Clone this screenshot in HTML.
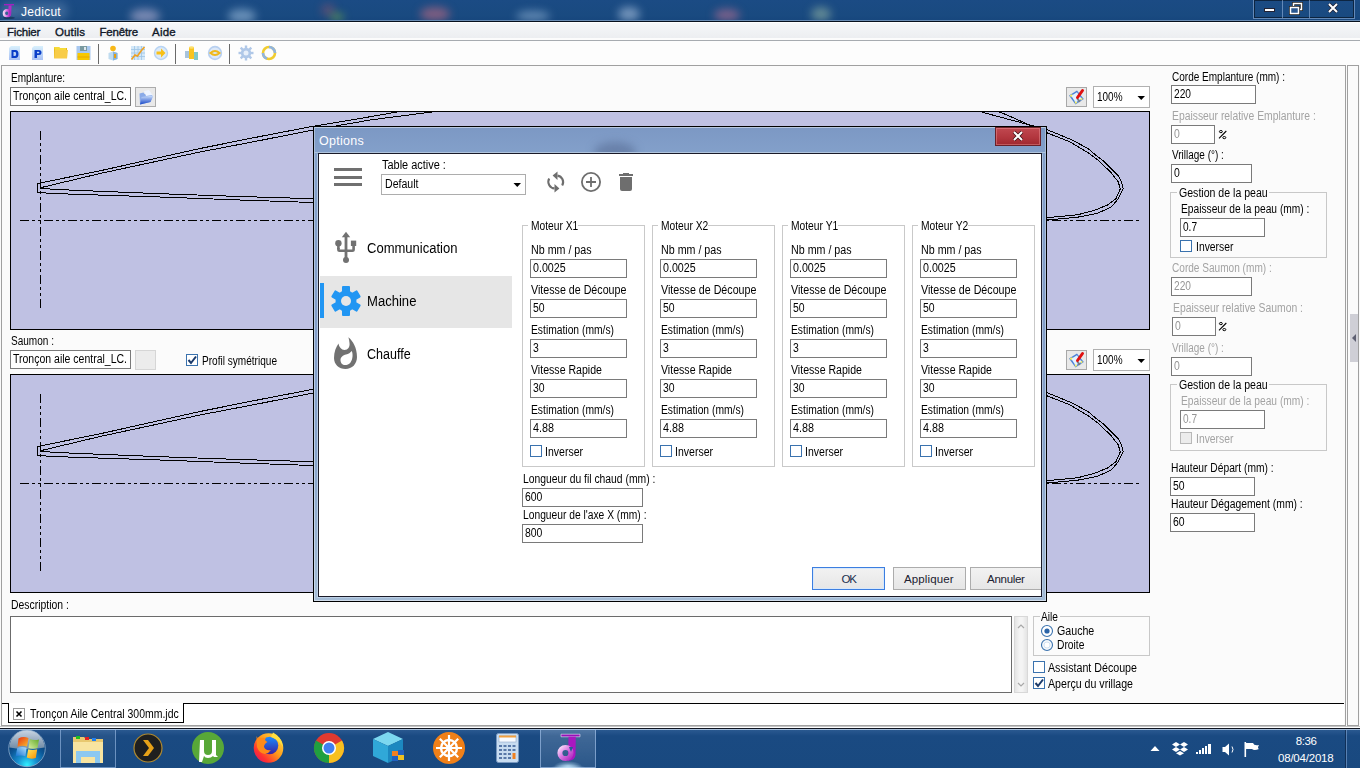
<!DOCTYPE html>
<html><head><meta charset="utf-8"><style>
html,body{margin:0;padding:0;width:1360px;height:768px;overflow:hidden;background:#fafafa;position:relative}
body>div,body>span,body>svg{position:absolute}
.t{position:absolute;font-family:"Liberation Sans",sans-serif;line-height:1;white-space:pre}
</style></head><body>
<div style="left:0px;top:0px;width:1360px;height:22px;background:linear-gradient(#1b4b84,#194a80 70%,#16457c)"></div>
<div style="left:130px;top:9px;width:30px;height:14px;border-radius:50%;background:rgba(200,190,220,.55);filter:blur(4px)"></div>
<div style="left:228px;top:9px;width:28px;height:14px;border-radius:50%;background:rgba(170,200,230,.55);filter:blur(4px)"></div>
<div style="left:321px;top:4px;width:14px;height:12px;border-radius:50%;background:rgba(200,90,100,.35);filter:blur(4px)"></div>
<div style="left:330px;top:13px;width:14px;height:8px;border-radius:50%;background:rgba(140,200,60,.5);filter:blur(4px)"></div>
<div style="left:420px;top:7px;width:30px;height:14px;border-radius:50%;background:rgba(210,110,130,.55);filter:blur(4px)"></div>
<div style="left:516px;top:11px;width:34px;height:10px;border-radius:50%;background:rgba(170,200,230,.5);filter:blur(4px)"></div>
<div style="left:618px;top:7px;width:22px;height:14px;border-radius:50%;background:rgba(190,210,235,.55);filter:blur(4px)"></div>
<div style="left:714px;top:9px;width:26px;height:12px;border-radius:50%;background:rgba(220,120,150,.5);filter:blur(4px)"></div>
<div style="left:811px;top:7px;width:20px;height:14px;border-radius:50%;background:rgba(170,200,170,.5);filter:blur(4px)"></div>
<div style="left:0px;top:20px;width:1360px;height:1px;background:#6a8cb4"></div>
<div style="left:0px;top:21px;width:1360px;height:1px;background:#06101e"></div>
<div style="left:14px;top:2px;width:54px;height:18px;border-radius:9px;background:rgba(150,180,215,.28);filter:blur(4px)"></div>
<div style="left:0px;top:2px;width:18px;height:18px;border-radius:9px;background:rgba(150,180,215,.25);filter:blur(3px)"></div>
<svg style="left:0px;top:0px" width="18" height="20" viewBox="0 0 18 20">
<defs><linearGradient id="jg" x1="0" y1="0" x2="1" y2="0"><stop offset="0" stop-color="#f4d0f4"/><stop offset=".6" stop-color="#d060e0"/><stop offset="1" stop-color="#a828c0"/></linearGradient></defs>
<ellipse cx="9" cy="17.8" rx="6" ry="1.2" fill="#0a2040" opacity=".5"/>
<path d="M4 4 H14 V5.4 H4 Z" fill="#a020c0"/>
<path d="M8.6 5.4 H11.6 L11.2 14 Q11 17 8 17.2 Z" fill="#b030c8"/>
<circle cx="6.8" cy="13.2" r="2.9" fill="none" stroke="url(#jg)" stroke-width="2.4"/>
</svg>
<div style="left:1253px;top:0;width:102px;height:19px;border:1px solid rgba(160,190,230,.55);border-top:none;box-sizing:border-box;box-shadow:inset 0 0 0 1px rgba(0,0,0,.5)"></div>
<div style="left:1282px;top:0px;width:1px;height:18px;background:rgba(160,190,230,.55)"></div>
<div style="left:1309px;top:0px;width:1px;height:18px;background:rgba(160,190,230,.55)"></div>
<div style="left:1264px;top:8px;width:11px;height:4px;background:#fff;border:1px solid #223;box-sizing:border-box"></div>
<svg style="left:1288px;top:1px" width="16" height="14"><rect x="5.5" y="2.5" width="8" height="6" fill="none" stroke="#222" stroke-width="3"/><rect x="5.5" y="2.5" width="8" height="6" fill="none" stroke="#fff" stroke-width="1.5"/>
<rect x="2.5" y="6.5" width="8" height="6" fill="#1b4a80" stroke="#222" stroke-width="3"/><rect x="2.5" y="6.5" width="8" height="6" fill="#2a5890" stroke="#fff" stroke-width="1.5"/></svg>
<svg style="left:1326px;top:1px" width="14" height="14"><path d="M3 3 L11 11 M11 3 L3 11" stroke="#223" stroke-width="3.5"/><path d="M3 3 L11 11 M11 3 L3 11" stroke="#fff" stroke-width="2"/></svg>
<div style="left:0px;top:22px;width:1360px;height:18px;background:linear-gradient(#ffffff 0px,#ffffff 1px,#f6f7f9 1px,#eceef1 16px,#fcfcfc 16px)"></div>
<div style="left:0px;top:40px;width:1360px;height:1px;background:#a7abb0"></div>
<div style="left:0px;top:41px;width:1360px;height:24px;background:#fdfdfd"></div>
<div style="left:98px;top:44px;width:1px;height:20px;background:#6a6a6a"></div>
<div style="left:175px;top:44px;width:1px;height:20px;background:#6a6a6a"></div>
<div style="left:229px;top:44px;width:1px;height:20px;background:#6a6a6a"></div>
<svg style="left:8px;top:45px" width="14" height="16" viewBox="0 0 14 16">
<defs><linearGradient id="pg" x1="0" y1="0" x2="0" y2="1"><stop offset="0" stop-color="#d8f0fc"/><stop offset="1" stop-color="#a8c0f4"/></linearGradient></defs>
<path d="M1 3 L3 1 H12 V15 H1 Z" fill="url(#pg)"/>
<path d="M3.5 5 H7.5 Q10.5 5 10.5 9 Q10.5 13 7.5 13 H3.5 Z M5.5 7 V11 H7 Q8.2 11 8.2 9 Q8.2 7 7 7 Z" fill="#0a3ec8" fill-rule="evenodd"/>
</svg>
<svg style="left:31px;top:45px" width="14" height="16" viewBox="0 0 14 16">
<path d="M1 3 L3 1 H12 V15 H1 Z" fill="url(#pg)"/>
<path d="M3.5 5 H8 Q10.5 5 10.5 7.5 Q10.5 10 8 10 H6 V13 H3.5 Z M6 6.8 V8.3 H7.8 Q8.3 8.3 8.3 7.5 Q8.3 6.8 7.8 6.8 Z" fill="#0a3ec8" fill-rule="evenodd"/>
</svg>
<svg style="left:53px;top:46px" width="16" height="14" viewBox="0 0 16 14">
<path d="M1 1 H6 L7 2 H14 V12 H1 Z" fill="#e8b820"/>
<path d="M2 4 H15 L14 12.5 H1 Z" fill="#f8cc48"/>
<path d="M1 1 H6 L7 2 H13 V4 H2 Z" fill="#fff04a" opacity=".6"/>
</svg>
<svg style="left:76px;top:46px" width="15" height="15" viewBox="0 0 15 15">
<rect x="0.5" y="0" width="14" height="14" fill="#a8c8f0"/>
<rect x="4" y="0" width="7" height="5" fill="#7a9aa0"/><rect x="8" y="1" width="2" height="3" fill="#dfe8ee"/>
<rect x="1.5" y="7" width="12" height="7" fill="#f8c800"/><rect x="1.5" y="10.5" width="12" height="1" fill="#e8a800"/>
</svg>
<svg style="left:106px;top:45px" width="14" height="16" viewBox="0 0 14 16">
<circle cx="7" cy="3.5" r="2.8" fill="#f8b818"/>
<path d="M2.5 8 L7 6.5 L11.5 8 V14 L7 15.5 L2.5 14 Z" fill="#c0dcf0"/>
<path d="M7 6.5 L11.5 8 V14 L7 15.5 Z" fill="#8ab4d8"/>
<rect x="8" y="9" width="2" height="4" fill="#e8a010"/>
</svg>
<svg style="left:130px;top:45px" width="16" height="16" viewBox="0 0 16 16">
<rect x="1" y="1" width="14" height="14" fill="#d4e8f8"/>
<path d="M1 4.5 H15 M1 8 H15 M1 11.5 H15 M4.5 1 V15 M8 1 V15 M11.5 1 V15" stroke="#9ec4e4" stroke-width=".8"/>
<path d="M1.5 14.5 L5 10 L7.5 11 L11 6 L14.5 2" stroke="#f0a020" stroke-width="1.6" fill="none"/>
</svg>
<svg style="left:153px;top:45px" width="16" height="16" viewBox="0 0 16 16">
<circle cx="8" cy="8" r="7.2" fill="#b8d4f4"/><circle cx="8" cy="8" r="5.8" fill="#dceaf8"/>
<path d="M3.5 6.5 H8 V3.5 L12.5 8 L8 12.5 V9.5 H3.5 Z" fill="#f8c018"/>
</svg>
<svg style="left:184px;top:45px" width="16" height="16" viewBox="0 0 16 16">
<rect x="1" y="6" width="4" height="7" fill="#a8c4dc"/>
<rect x="5" y="2" width="5" height="12" fill="#f8c420"/><ellipse cx="7.5" cy="2.5" rx="2.5" ry="1.2" fill="#fde070"/>
<rect x="10" y="7" width="4" height="8" fill="#80c8c8"/>
</svg>
<svg style="left:207px;top:45px" width="16" height="16" viewBox="0 0 16 16">
<circle cx="8" cy="8" r="7.2" fill="#b8d0f0"/><circle cx="8" cy="8" r="5.5" fill="#dce8f8"/>
<path d="M3.5 8 Q8 4 12.5 8 Q8 12 3.5 8 Z" fill="none" stroke="#f0b818" stroke-width="2"/>
</svg>
<svg style="left:238px;top:45px" width="16" height="16" viewBox="0 0 16 16">
<g fill="#b0c8e8"><circle cx="8" cy="8" r="5.2"/>
<rect x="6.8" y="0.5" width="2.4" height="15"/><rect x="0.5" y="6.8" width="15" height="2.4"/>
<rect x="6.8" y="0.5" width="2.4" height="15" transform="rotate(45 8 8)"/><rect x="6.8" y="0.5" width="2.4" height="15" transform="rotate(-45 8 8)"/></g>
<circle cx="8" cy="8" r="2.5" fill="#e8f0fa"/>
</svg>
<svg style="left:261px;top:45px" width="16" height="16" viewBox="0 0 16 16">
<circle cx="8" cy="8" r="6" fill="none" stroke="#f0cc30" stroke-width="2.6"/>
<path d="M8 2 A6 6 0 0 1 14 8" fill="none" stroke="#90b4e0" stroke-width="2.6"/>
<path d="M2 8 A6 6 0 0 0 6 13.6" fill="none" stroke="#90b4e0" stroke-width="2.6"/>
</svg>
<div style="left:1px;top:65px;width:1345px;height:661px;background:#fbfbfb;border:1px solid #a0a0a0;box-sizing:border-box"></div>
<div style="left:1347px;top:65px;width:12px;height:661px;background:#fbfbfb;border:1px solid #a0a0a0;box-sizing:border-box"></div>
<div style="left:1350px;top:314px;width:8px;height:48px;background:#cfcfd6"></div>
<svg style="left:1350px;top:332px" width="8" height="12"><path d="M2 6 L6 2 V10 Z" fill="#5e6072"/></svg>
<div style="left:10px;top:87px;width:121px;height:19px;background:#fff;border:1px solid #7a7a7a;box-sizing:border-box"></div>
<div style="left:135px;top:87px;width:21px;height:20px;background:#e9e9e9;border:1px solid #acacac;box-sizing:border-box"></div>
<svg style="left:135px;top:87px" width="21" height="20" viewBox="0 0 21 20">
<defs><linearGradient id="fg" x1="0" y1="0" x2="0" y2="1"><stop offset="0" stop-color="#d0e2fc"/><stop offset="1" stop-color="#1848c8"/></linearGradient></defs>
<path d="M4.5 6.5 L8.5 5.5 L9.5 7 L16 6.5 L17.5 9 L15.5 15 L5 17.5 Z" fill="#8aaae8"/>
<path d="M9 4 L14 3 L17.5 8 L11 9 Z" fill="#eef4ff"/>
<path d="M6.5 10 L18.5 8.5 L15.5 15 L5 17.5 Z" fill="url(#fg)"/>
</svg>
<div style="left:1066px;top:87px;width:21px;height:20px;background:#e9e9e9;border:1px solid #a8a8a8;box-sizing:border-box"></div>
<svg style="left:1066px;top:87px" width="21" height="20" viewBox="0 0 21 20">
<path d="M3 8.5 L11 3.5 L17.8 12 L9.5 17.6 Z" fill="#4a80d8"/>
<path d="M5.2 8.8 L11 5.3 L15.6 11.8 L9.6 15.5 Z" fill="#e4f2ff"/>
<path d="M3.5 8.5 L6.5 7 L5.5 10.5 Z M9.5 17 L8.5 14 L11.5 15.5 Z M17 12 L14.5 13.5 L15 10.5 Z" fill="#f8f060"/>
<path d="M11.3 11.5 L13.8 14.8" stroke="#7a8088" stroke-width="2"/>
<path d="M16.5 3.5 L11.5 10.5" stroke="#e01010" stroke-width="3" stroke-linecap="round"/>
</svg>
<div style="left:1093px;top:86px;width:57px;height:22px;background:#fff;border:1px solid #b0b0b0;box-sizing:border-box"></div>
<svg style="left:1137px;top:95px" width="9" height="6"><path d="M0.5 1 H8 L4.25 5 Z" fill="#000"/></svg>
<div style="left:10px;top:350px;width:121px;height:19px;background:#fff;border:1px solid #7a7a7a;box-sizing:border-box"></div>
<div style="left:135px;top:350px;width:21px;height:20px;background:#ececec;border:1px solid #d6d6d6;box-sizing:border-box"></div>
<div style="left:186px;top:354px;width:12px;height:12px;background:#fff;border:1px solid #3a72ae;box-sizing:border-box"></div>
<svg style="left:186px;top:354px" width="12" height="12"><path d="M2.5 6 L5 9 L10 2.5" stroke="#1a3a6a" stroke-width="2" fill="none"/></svg>
<div style="left:1066px;top:350px;width:21px;height:20px;background:#e9e9e9;border:1px solid #a8a8a8;box-sizing:border-box"></div>
<svg style="left:1066px;top:350px" width="21" height="20" viewBox="0 0 21 20">
<path d="M3 8.5 L11 3.5 L17.8 12 L9.5 17.6 Z" fill="#4a80d8"/>
<path d="M5.2 8.8 L11 5.3 L15.6 11.8 L9.6 15.5 Z" fill="#e4f2ff"/>
<path d="M3.5 8.5 L6.5 7 L5.5 10.5 Z M9.5 17 L8.5 14 L11.5 15.5 Z M17 12 L14.5 13.5 L15 10.5 Z" fill="#f8f060"/>
<path d="M11.3 11.5 L13.8 14.8" stroke="#7a8088" stroke-width="2"/>
<path d="M16.5 3.5 L11.5 10.5" stroke="#e01010" stroke-width="3" stroke-linecap="round"/>
</svg>
<div style="left:1093px;top:349px;width:57px;height:22px;background:#fff;border:1px solid #b0b0b0;box-sizing:border-box"></div>
<svg style="left:1137px;top:358px" width="9" height="6"><path d="M0.5 1 H8 L4.25 5 Z" fill="#000"/></svg>
<div style="left:10px;top:616px;width:1002px;height:77px;background:#fff;border:1px solid #6b6b6b;box-sizing:border-box"></div>
<div style="left:1014px;top:616px;width:14px;height:77px;background:linear-gradient(90deg,#e4e4e4,#f4f4f4 40%,#f4f4f4 60%,#e4e4e4);border:1px solid #d8d8d8;box-sizing:border-box"></div>
<svg style="left:1014px;top:620px" width="14" height="70"><path d="M4 8 L7 5 L10 8" stroke="#a8a8a8" stroke-width="1.2" fill="none"/><path d="M4 63 L7 66 L10 63" stroke="#a8a8a8" stroke-width="1.2" fill="none"/></svg>
<div style="left:1033px;top:616px;width:117px;height:40px;border:1px solid #c8c8c8;box-sizing:border-box"></div>
<div style="left:1040px;top:612px;width:20px;height:8px;background:#fbfbfb"></div>
<svg style="left:1040px;top:624px" width="14" height="28">
<circle cx="7" cy="7" r="5.5" fill="#fff" stroke="#3a72ae" stroke-width="1.1"/><circle cx="7" cy="7" r="2.6" fill="#2a64a8"/>
<circle cx="7" cy="21" r="5.5" fill="#f4f8fc" stroke="#3a72ae" stroke-width="1.1"/><circle cx="7" cy="21" r="3" fill="#fff" stroke="#c8dcf0" stroke-width=".8"/>
</svg>
<div style="left:1033px;top:661px;width:12px;height:12px;background:#fff;border:1px solid #3a72ae;box-sizing:border-box"></div>
<div style="left:1033px;top:677px;width:12px;height:12px;background:#fff;border:1px solid #3a72ae;box-sizing:border-box"></div>
<svg style="left:1033px;top:677px" width="12" height="12"><path d="M2.5 6 L5 9 L10 2.5" stroke="#1a3a6a" stroke-width="2" fill="none"/></svg>
<div style="left:2px;top:703px;width:6px;height:1px;background:#000"></div>
<div style="left:183px;top:703px;width:1161px;height:1px;background:#000"></div>
<div style="left:8px;top:703px;width:176px;height:20px;background:#fff;border:1px solid #000;border-top:none;box-sizing:border-box"></div>
<div style="left:8px;top:722px;width:1px;height:0px;"></div>
<div style="left:3px;top:704px;width:5px;height:21px;background:#fff"></div>
<div style="left:184px;top:704px;width:1160px;height:21px;background:#fff"></div>
<div style="left:13px;top:708px;width:12px;height:12px;background:#fff;border:1px solid #9a9a9a;box-sizing:border-box"></div>
<svg style="left:13px;top:708px" width="12" height="12"><path d="M3.5 3.5 L8.5 8.5 M8.5 3.5 L3.5 8.5" stroke="#000" stroke-width="1.6"/></svg>
<svg style="left:10px;top:111px" width="1140" height="219" viewBox="0 0 1140 219"><rect x="0.5" y="0.5" width="1139" height="218" fill="#bfc1e3" stroke="#000" stroke-width="1"/><g stroke="#000" stroke-width="1" fill="none" stroke-dasharray="9 3 3 3 3 3"><path d="M10 109.5 H1130"/><path d="M30.5 20 V197"/></g><g stroke="#000" stroke-width="1" fill="none" shape-rendering="crispEdges"><polyline points="30.00,72.00 90.00,59.80 190.00,37.50 250.00,25.50 303.00,15.30 350.00,7.50 387.00,1.00 460.00,-11.00 690.00,-26.00 890.00,-16.00 970.00,0.50 982.50,4.00 1037.00,18.60 1060.00,28.10 1069.00,32.70 1078.20,37.70 1087.30,45.40 1094.60,50.90 1101.00,57.30 1108.30,65.00 1111.50,71.00 1113.30,77.80"/><polyline points="31.00,76.60 90.00,62.50 190.00,41.00 250.00,29.50 303.00,19.00 360.00,9.00 422.00,1.00 490.00,-10.00 690.00,-21.00 910.00,-13.00 988.00,0.50 997.00,4.00 1037.00,21.80 1060.00,30.90 1078.20,41.80 1087.30,48.60 1101.00,61.40 1108.30,71.00 1110.30,77.80"/><polyline points="30.00,77.30 44.00,78.30 70.00,79.50 150.00,82.70 230.00,85.50 303.00,87.70 490.00,94.00 790.00,101.00 990.00,105.50 1037.00,106.70 1067.50,103.80 1084.50,99.30 1097.50,94.00 1106.00,87.60 1110.30,77.80"/><polyline points="30.00,81.50 41.00,82.40 69.00,83.40 150.00,86.00 230.00,89.00 303.00,91.50 490.00,97.00 790.00,105.00 990.00,109.00 1037.00,109.00 1067.50,106.20 1087.00,102.50 1101.40,96.00 1107.90,88.20 1113.10,77.80"/><path d="M30 72.5 H27.5 V81.5 H30"/></g><rect x="0.5" y="0.5" width="1139" height="218" fill="none" stroke="#000" stroke-width="1"/></svg>
<svg style="left:10px;top:374px" width="1140" height="219" viewBox="0 0 1140 219"><rect x="0.5" y="0.5" width="1139" height="218" fill="#bfc1e3" stroke="#000" stroke-width="1"/><g stroke="#000" stroke-width="1" fill="none" stroke-dasharray="9 3 3 3 3 3"><path d="M10 109.5 H1130"/><path d="M30.5 20 V197"/></g><g stroke="#000" stroke-width="1" fill="none" shape-rendering="crispEdges"><polyline points="30.00,72.00 90.00,59.80 190.00,37.50 250.00,25.50 303.00,15.30 350.00,7.50 387.00,1.00 460.00,-11.00 690.00,-26.00 890.00,-16.00 970.00,0.50 982.50,4.00 1037.00,18.60 1060.00,28.10 1069.00,32.70 1078.20,37.70 1087.30,45.40 1094.60,50.90 1101.00,57.30 1108.30,65.00 1111.50,71.00 1113.30,77.80"/><polyline points="31.00,76.60 90.00,62.50 190.00,41.00 250.00,29.50 303.00,19.00 360.00,9.00 422.00,1.00 490.00,-10.00 690.00,-21.00 910.00,-13.00 988.00,0.50 997.00,4.00 1037.00,21.80 1060.00,30.90 1078.20,41.80 1087.30,48.60 1101.00,61.40 1108.30,71.00 1110.30,77.80"/><polyline points="30.00,77.30 44.00,78.30 70.00,79.50 150.00,82.70 230.00,85.50 303.00,87.70 490.00,94.00 790.00,101.00 990.00,105.50 1037.00,106.70 1067.50,103.80 1084.50,99.30 1097.50,94.00 1106.00,87.60 1110.30,77.80"/><polyline points="30.00,81.50 41.00,82.40 69.00,83.40 150.00,86.00 230.00,89.00 303.00,91.50 490.00,97.00 790.00,105.00 990.00,109.00 1037.00,109.00 1067.50,106.20 1087.00,102.50 1101.40,96.00 1107.90,88.20 1113.10,77.80"/><path d="M30 72.5 H27.5 V81.5 H30"/></g><rect x="0.5" y="0.5" width="1139" height="218" fill="none" stroke="#000" stroke-width="1"/></svg>
<div style="left:1171px;top:85px;width:85px;height:19px;background:#fff;border:1px solid #7a7a7a;box-sizing:border-box"></div>
<div style="left:1171px;top:125px;width:44px;height:19px;background:#fff;border:1px solid #7a7a7a;box-sizing:border-box"></div>
<svg style="left:1218px;top:129px" width="10" height="11"><path d="M1 9.3 L8.3 2" stroke="#000" stroke-width="1.1"/><ellipse cx="2.9" cy="2.6" rx="1.5" ry="1.1" fill="none" stroke="#000" stroke-width="1"/><ellipse cx="6.3" cy="8.6" rx="1.5" ry="1.1" fill="none" stroke="#000" stroke-width="1"/></svg>
<div style="left:1171px;top:164px;width:81px;height:19px;background:#fff;border:1px solid #7a7a7a;box-sizing:border-box"></div>
<div style="left:1170px;top:192px;width:157px;height:66px;border:1px solid #c8c8c8;box-sizing:border-box"></div>
<div style="left:1177px;top:187px;width:92px;height:8px;background:#fbfbfb"></div>
<div style="left:1180px;top:218px;width:85px;height:19px;background:#fff;border:1px solid #7a7a7a;box-sizing:border-box"></div>
<div style="left:1180px;top:240px;width:12px;height:12px;background:#fff;border:1px solid #3a72ae;box-sizing:border-box"></div>
<div style="left:1171px;top:277px;width:81px;height:19px;background:#fff;border:1px solid #7a7a7a;box-sizing:border-box"></div>
<div style="left:1172px;top:317px;width:44px;height:19px;background:#fff;border:1px solid #7a7a7a;box-sizing:border-box"></div>
<svg style="left:1218px;top:321px" width="10" height="11"><path d="M1 9.3 L8.3 2" stroke="#000" stroke-width="1.1"/><ellipse cx="2.9" cy="2.6" rx="1.5" ry="1.1" fill="none" stroke="#000" stroke-width="1"/><ellipse cx="6.3" cy="8.6" rx="1.5" ry="1.1" fill="none" stroke="#000" stroke-width="1"/></svg>
<div style="left:1171px;top:357px;width:81px;height:19px;background:#fff;border:1px solid #7a7a7a;box-sizing:border-box"></div>
<div style="left:1170px;top:384px;width:157px;height:67px;border:1px solid #c8c8c8;box-sizing:border-box"></div>
<div style="left:1177px;top:379px;width:92px;height:8px;background:#fbfbfb"></div>
<div style="left:1180px;top:410px;width:85px;height:19px;background:#fff;border:1px solid #7a7a7a;box-sizing:border-box"></div>
<div style="left:1180px;top:432px;width:12px;height:12px;background:#ececec;border:1px solid #b8b8b8;box-sizing:border-box"></div>
<div style="left:1170px;top:477px;width:85px;height:19px;background:#fff;border:1px solid #7a7a7a;box-sizing:border-box"></div>
<div style="left:1170px;top:513px;width:85px;height:19px;background:#fff;border:1px solid #7a7a7a;box-sizing:border-box"></div>
<div style="left:313px;top:126px;width:734px;height:476px;background:#000"></div>
<div style="left:314px;top:127px;width:732px;height:474px;background:linear-gradient(180deg,#7c98c4 0px,#83a0ca 26px,#819cc8 180px,#86a2ca 330px,#a4bcd6 100%)"></div>
<div style="left:314px;top:127px;width:732px;height:1px;background:#b8c8e0"></div>
<div style="left:314px;top:127px;width:1px;height:474px;background:linear-gradient(#a8bcd8,#c8d8ea)"></div>
<div style="left:1045px;top:127px;width:1px;height:474px;background:linear-gradient(#a8bcd8,#c4d4e6)"></div>
<div style="left:1042px;top:154px;width:1px;height:442px;background:rgba(200,215,235,.6)"></div>
<div style="left:314px;top:600px;width:732px;height:1px;background:#d0dcea"></div>
<div style="left:594px;top:142px;width:42px;height:20px;border-radius:50%;background:rgba(80,100,140,.5);filter:blur(4px)"></div>
<div style="left:314px;top:152px;width:732px;height:1px;background:#b0c4dc"></div>
<div style="left:318px;top:153px;width:724px;height:444px;background:#1a1a28"></div>
<div style="left:319px;top:154px;width:722px;height:442px;background:#fff"></div>
<div style="left:317px;top:154px;width:1px;height:443px;background:rgba(205,220,238,.7)"></div>
<div style="left:317px;top:597px;width:725px;height:1px;background:rgba(205,220,238,.6)"></div>
<div style="left:995px;top:127px;width:46px;height:19px;background:linear-gradient(#c04850,#b43840 50%,#a02830);border:1px solid #6a2028;box-sizing:border-box;box-shadow:inset 0 0 0 1px rgba(255,180,180,.35)"></div>
<svg style="left:1011px;top:129px" width="14" height="14"><path d="M3 3 L11 11 M11 3 L3 11" stroke="#401018" stroke-width="3.6"/><path d="M3 3 L11 11 M11 3 L3 11" stroke="#fff" stroke-width="2"/></svg>
<div style="left:334px;top:168px;width:28px;height:3px;background:#707070"></div>
<div style="left:334px;top:176px;width:28px;height:3px;background:#707070"></div>
<div style="left:334px;top:183px;width:28px;height:3px;background:#707070"></div>
<div style="left:381px;top:174px;width:145px;height:21px;background:#fff;border:1px solid #adadad;box-sizing:border-box"></div>
<svg style="left:513px;top:182px" width="9" height="6"><path d="M0.5 1 H8 L4.25 5 Z" fill="#000"/></svg>
<svg style="left:546px;top:170px" width="20" height="24" viewBox="0 0 20 24">
<g fill="none" stroke="#6e6e6e" stroke-width="2.1">
<path d="M11.5 5.6 A6.6 6.6 0 0 1 16.2 15.5"/>
<path d="M8.5 18.4 A6.6 6.6 0 0 1 3.2 8.6"/></g>
<path d="M11.5 1.5 V10 L6.6 5.6 Z" fill="#6e6e6e"/>
<path d="M8.5 14 V22.5 L13.4 18.4 Z" fill="#6e6e6e"/>
</svg>
<svg style="left:580px;top:171px" width="22" height="22" viewBox="0 0 22 22">
<circle cx="11" cy="11" r="9.1" fill="none" stroke="#6e6e6e" stroke-width="1.8"/>
<path d="M6 11 H16 M11 6 V16" stroke="#6e6e6e" stroke-width="1.8"/>
</svg>
<svg style="left:618px;top:172px" width="16" height="20" viewBox="0 0 16 20">
<path d="M1 2 H15 V4 H1 Z M5 1 H11 V2 H5 Z" fill="#6e6e6e"/>
<path d="M2 5 H14 V17 Q14 19 12 19 H4 Q2 19 2 17 Z" fill="#6e6e6e"/>
</svg>
<svg style="left:326px;top:226px" width="40" height="40" viewBox="0 0 40 40">
<g fill="#717171">
<rect x="18.6" y="10" width="2.8" height="24"/>
<path d="M20 5.7 L24.2 11.2 H15.8 Z"/>
<circle cx="12.4" cy="17.2" r="3.2"/>
<rect x="11.1" y="17" width="2.6" height="6"/>
<path d="M11.1 22 V23.6 Q11.1 26.1 13.6 26.1 H26.3 Q28.9 26.1 28.9 23.6 V19 H26.3 V23.4 H13.7 V22 Z"/>
<rect x="24.9" y="14.6" width="5.3" height="5.4"/>
<circle cx="20" cy="34" r="3"/>
</g></svg>
<div style="left:320px;top:276px;width:192px;height:52px;background:#e6e6e6"></div>
<div style="left:320px;top:283px;width:4px;height:35px;background:#2196f3"></div>
<svg style="left:331px;top:286px" width="30" height="30" viewBox="0 0 30 30">
<g fill="#2196f3">
<circle cx="15" cy="15" r="10.5"/>
<rect x="11" y="0" width="8" height="30" rx="1"/>
<rect x="11" y="0" width="8" height="30" rx="1" transform="rotate(60 15 15)"/>
<rect x="11" y="0" width="8" height="30" rx="1" transform="rotate(-60 15 15)"/>
</g><circle cx="15" cy="15" r="5" fill="#e6e6e6"/></svg>
<svg style="left:326px;top:333px" width="40" height="40" viewBox="0 0 40 40">
<path fill="#717171" fill-rule="evenodd" d="M22.4 4.2 C27 8 31 15 31 24 C31 31 26 36 19.5 36 C13 36 8 31.5 8 25 C8 19 10 14 12.5 10.5 C13 14 15.5 17 18.5 17 C22 17 24 14 23.5 10 C23.3 8 23 6 22.4 4.2 Z M25.8 18 C27 21 27 26 24.5 29.5 C23 31.5 21 32 19 32 C16.5 32 14.5 30 14.5 27 C14.5 24 17 22.2 20 21.5 C22.5 21 24.5 19.5 25.8 18 Z"/>
</svg>
<div style="left:522px;top:225px;width:123px;height:242px;border:1px solid #c9c9c9;box-sizing:border-box"></div>
<div style="left:528px;top:220px;width:50px;height:8px;background:#fff"></div>
<div style="left:530px;top:259px;width:97px;height:19px;background:#fff;border:1px solid #7a7a7a;box-sizing:border-box"></div>
<div style="left:530px;top:299px;width:97px;height:19px;background:#fff;border:1px solid #7a7a7a;box-sizing:border-box"></div>
<div style="left:530px;top:339px;width:97px;height:19px;background:#fff;border:1px solid #7a7a7a;box-sizing:border-box"></div>
<div style="left:530px;top:379px;width:97px;height:19px;background:#fff;border:1px solid #7a7a7a;box-sizing:border-box"></div>
<div style="left:530px;top:419px;width:97px;height:19px;background:#fff;border:1px solid #7a7a7a;box-sizing:border-box"></div>
<div style="left:530px;top:445px;width:12px;height:12px;background:#fff;border:1px solid #3a72ae;box-sizing:border-box"></div>
<div style="left:652px;top:225px;width:123px;height:242px;border:1px solid #c9c9c9;box-sizing:border-box"></div>
<div style="left:658px;top:220px;width:50px;height:8px;background:#fff"></div>
<div style="left:660px;top:259px;width:97px;height:19px;background:#fff;border:1px solid #7a7a7a;box-sizing:border-box"></div>
<div style="left:660px;top:299px;width:97px;height:19px;background:#fff;border:1px solid #7a7a7a;box-sizing:border-box"></div>
<div style="left:660px;top:339px;width:97px;height:19px;background:#fff;border:1px solid #7a7a7a;box-sizing:border-box"></div>
<div style="left:660px;top:379px;width:97px;height:19px;background:#fff;border:1px solid #7a7a7a;box-sizing:border-box"></div>
<div style="left:660px;top:419px;width:97px;height:19px;background:#fff;border:1px solid #7a7a7a;box-sizing:border-box"></div>
<div style="left:660px;top:445px;width:12px;height:12px;background:#fff;border:1px solid #3a72ae;box-sizing:border-box"></div>
<div style="left:782px;top:225px;width:123px;height:242px;border:1px solid #c9c9c9;box-sizing:border-box"></div>
<div style="left:788px;top:220px;width:50px;height:8px;background:#fff"></div>
<div style="left:790px;top:259px;width:97px;height:19px;background:#fff;border:1px solid #7a7a7a;box-sizing:border-box"></div>
<div style="left:790px;top:299px;width:97px;height:19px;background:#fff;border:1px solid #7a7a7a;box-sizing:border-box"></div>
<div style="left:790px;top:339px;width:97px;height:19px;background:#fff;border:1px solid #7a7a7a;box-sizing:border-box"></div>
<div style="left:790px;top:379px;width:97px;height:19px;background:#fff;border:1px solid #7a7a7a;box-sizing:border-box"></div>
<div style="left:790px;top:419px;width:97px;height:19px;background:#fff;border:1px solid #7a7a7a;box-sizing:border-box"></div>
<div style="left:790px;top:445px;width:12px;height:12px;background:#fff;border:1px solid #3a72ae;box-sizing:border-box"></div>
<div style="left:912px;top:225px;width:123px;height:242px;border:1px solid #c9c9c9;box-sizing:border-box"></div>
<div style="left:918px;top:220px;width:50px;height:8px;background:#fff"></div>
<div style="left:920px;top:259px;width:97px;height:19px;background:#fff;border:1px solid #7a7a7a;box-sizing:border-box"></div>
<div style="left:920px;top:299px;width:97px;height:19px;background:#fff;border:1px solid #7a7a7a;box-sizing:border-box"></div>
<div style="left:920px;top:339px;width:97px;height:19px;background:#fff;border:1px solid #7a7a7a;box-sizing:border-box"></div>
<div style="left:920px;top:379px;width:97px;height:19px;background:#fff;border:1px solid #7a7a7a;box-sizing:border-box"></div>
<div style="left:920px;top:419px;width:97px;height:19px;background:#fff;border:1px solid #7a7a7a;box-sizing:border-box"></div>
<div style="left:920px;top:445px;width:12px;height:12px;background:#fff;border:1px solid #3a72ae;box-sizing:border-box"></div>
<div style="left:522px;top:488px;width:121px;height:19px;background:#fff;border:1px solid #7a7a7a;box-sizing:border-box"></div>
<div style="left:522px;top:524px;width:121px;height:19px;background:#fff;border:1px solid #7a7a7a;box-sizing:border-box"></div>
<div style="left:812px;top:567px;width:73px;height:23px;background:linear-gradient(#f2f2f2,#e6e6e6);border:1px solid #3c7ee0;box-sizing:border-box;box-shadow:inset 0 0 0 1px #d8e8fa"></div>
<div style="left:893px;top:567px;width:73px;height:23px;background:linear-gradient(#f2f2f2,#e6e6e6);border:1px solid #acacac;box-sizing:border-box"></div>
<div style="left:970px;top:567px;width:71px;height:23px;background:linear-gradient(#f2f2f2,#e6e6e6);border:1px solid #acacac;border-right:none;box-sizing:border-box"></div>
<div style="left:0px;top:726px;width:1360px;height:1px;background:#c4c4c4"></div>
<div style="left:0px;top:727px;width:1360px;height:1px;background:#ffffff"></div>
<div style="left:0px;top:728px;width:1360px;height:1px;background:#0e1420"></div>
<div style="left:0px;top:729px;width:1360px;height:39px;background:linear-gradient(#a8c0dc 0px,#a8c0dc 1px,#2a5990 1px,#1a4a82 7px,#19497f 100%)"></div>
<div style="left:1345px;top:730px;width:1px;height:38px;background:rgba(10,30,60,.6)"></div>
<div style="left:1346px;top:730px;width:1px;height:38px;background:rgba(140,175,220,.55)"></div>
<svg style="left:7px;top:729px" width="40" height="40" viewBox="0 0 40 40">
<defs><radialGradient id="orb" cx=".5" cy=".95" r=".75"><stop offset="0" stop-color="#30f0ff"/><stop offset=".35" stop-color="#1890d0"/><stop offset=".7" stop-color="#0c5898"/><stop offset="1" stop-color="#0a3a70"/></radialGradient>
<linearGradient id="orbh" x1="0" y1="0" x2="0" y2="1"><stop offset="0" stop-color="#e0e8f0"/><stop offset="1" stop-color="#7890a8"/></linearGradient>
<linearGradient id="wr" x1="0" y1="0" x2="1" y2="1"><stop offset="0" stop-color="#e83010"/><stop offset="1" stop-color="#f8c030"/></linearGradient>
<linearGradient id="wg" x1="1" y1="0" x2="0" y2="1"><stop offset="0" stop-color="#60a828"/><stop offset="1" stop-color="#d8f0a0"/></linearGradient>
<linearGradient id="wb" x1="0" y1="1" x2="1" y2="0"><stop offset="0" stop-color="#1070d0"/><stop offset="1" stop-color="#b0e0ff"/></linearGradient>
<linearGradient id="wy" x1="1" y1="1" x2="0" y2="0"><stop offset="0" stop-color="#f89000"/><stop offset="1" stop-color="#ffe860"/></linearGradient></defs>
<circle cx="20" cy="19.4" r="18.3" fill="url(#orb)"/>
<path d="M2.5 18.5 A17.5 17.5 0 0 1 37.5 18.5 Q20 21.5 2.5 18.5 Z" fill="url(#orbh)" opacity=".9"/>
<circle cx="20" cy="19.4" r="18.3" fill="none" stroke="#8fb0d0" stroke-width=".9" opacity=".85"/>
<path d="M11.5 9.5 Q16 7 21.5 9 L20 17.5 Q15 15.8 10.5 17.8 Z" fill="url(#wr)"/>
<path d="M22.8 10 Q27 11.8 32 10.5 L30.5 19 Q26 20.5 21.5 19 Z" fill="url(#wg)"/>
<path d="M10.2 19 Q15 17 19.6 18.8 L18.4 27.2 Q13.5 25.5 8.6 27.5 Z" fill="url(#wb)"/>
<path d="M21.2 20.2 Q25.5 21.8 30.2 20.3 L28.8 29 Q24 30.5 19.8 28.6 Z" fill="url(#wy)"/>
</svg>
<div style="left:60px;top:729px;width:56px;height:39px;background:linear-gradient(rgba(255,255,255,.06),rgba(255,255,255,.02));border:1px solid rgba(170,200,240,.55);box-sizing:border-box"></div>
<svg style="left:70px;top:733px" width="36" height="32" viewBox="0 0 36 32">
<path d="M3 4 H14 L16 6 H33 V30 H3 Z" fill="#e8c870"/>
<rect x="6" y="3" width="4" height="3" fill="#20c020"/><rect x="15" y="4" width="4" height="3" fill="#e02020"/><rect x="22" y="5" width="4" height="3" fill="#2080f0"/>
<path d="M3 9 H33 V30 H3 Z" fill="#f8e4a0"/>
<path d="M6 18 H30 V30 H25 V24 H11 V30 H6 Z" fill="#8cc8f0"/>
</svg>
<svg style="left:133px;top:733px" width="30" height="30" viewBox="0 0 30 30">
<circle cx="15" cy="15" r="14" fill="#1f1f1f" stroke="#b08a30" stroke-width="1.2"/>
<path d="M10 7 H15 L21 15 L15 23 H10 L16 15 Z" fill="#e8a218"/>
</svg>
<svg style="left:191px;top:731px" width="34" height="34" viewBox="0 0 34 34">
<circle cx="17" cy="17" r="16" fill="#58a838"/>
<path d="M9 9 H13 V20 Q13 24 17 24 Q21 24 21 20 V9 H25 V24 L27 26 H23 L22 25 Q20 27 17 27 Q14 27 13 25 L11 31 H8 Z" fill="#fff"/>
</svg>
<svg style="left:246px;top:728px" width="44" height="40" viewBox="0 0 44 40">
<defs><linearGradient id="ffo" x1="1" y1="0" x2="0" y2="1"><stop offset="0" stop-color="#ffe84a"/><stop offset=".45" stop-color="#ff9a1a"/><stop offset=".75" stop-color="#ff3030"/><stop offset="1" stop-color="#d0107a"/></linearGradient>
<linearGradient id="ffb" x1="0" y1="0" x2="0" y2="1"><stop offset="0" stop-color="#1a8cff"/><stop offset="1" stop-color="#3a20a0"/></linearGradient></defs>
<circle cx="22.5" cy="20" r="14.8" fill="url(#ffo)"/>
<circle cx="23.5" cy="17.5" r="8.8" fill="url(#ffb)"/>
<path d="M27 4.5 Q36 9 37 19 Q33 12 25 9 Z" fill="#ffe040"/>
<path d="M10.5 8 L12 11 Q16 9 20 10 Q17.5 12 21.5 14 Q18 16 18 19 Q20 23 25 22 Q23 25 19 26 Q13 25 11 19 Z" fill="#ff8a18"/>
</svg>
<svg style="left:313px;top:732px" width="32" height="32" viewBox="0 0 32 32">
<circle cx="16" cy="16" r="15" fill="#e03a30"/>
<path d="M16 16 L29 8.5 A15 15 0 0 1 16 31 Z" fill="#f8c020"/>
<path d="M16 16 L16 31 A15 15 0 0 1 3 8.5 Z" fill="#20a040"/>
<circle cx="16" cy="16" r="7" fill="#fff"/><circle cx="16" cy="16" r="5.5" fill="#4080f0"/>
</svg>
<svg style="left:372px;top:731px" width="34" height="34" viewBox="0 0 34 34">
<path d="M16 1 L31 8 L16 15 L1 8 Z" fill="#7cd8f0"/>
<path d="M1 8 L16 15 V32 L1 25 Z" fill="#30a8d8"/>
<path d="M31 8 L16 15 V32 L31 25 Z" fill="#1c88c0"/>
<rect x="20" y="20" width="6" height="5" fill="#f08020"/><rect x="26" y="19" width="6" height="5" fill="#2060c0"/><rect x="20" y="25" width="6" height="5" fill="#2060c0"/><rect x="26" y="24" width="6" height="5" fill="#f0c020"/>
</svg>
<svg style="left:432px;top:731px" width="34" height="34" viewBox="0 0 34 34">
<circle cx="17" cy="17" r="16" fill="#f08018"/>
<circle cx="17" cy="17" r="8" fill="none" stroke="#fff" stroke-width="2.4"/>
<circle cx="17" cy="17" r="2.8" fill="#fff"/>
<g stroke="#fff" stroke-width="2.2"><path d="M17 4 V30 M4 17 H30 M7.8 7.8 L26.2 26.2 M26.2 7.8 L7.8 26.2"/></g>
</svg>
<svg style="left:496px;top:733px" width="23" height="30" viewBox="0 0 23 30">
<rect x="0.5" y="0.5" width="22" height="29" rx="2" fill="#c8dcf0" stroke="#7898c0"/>
<rect x="3" y="3" width="17" height="6" fill="#f8fbff" stroke="#90a8c8" stroke-width=".6"/>
<rect x="3" y="2.5" width="17" height="2" fill="#f0a040"/>
<g fill="#5878a8">
<rect x="3" y="12" width="3" height="2"/><rect x="7.5" y="12" width="3" height="2"/><rect x="12" y="12" width="3" height="2"/><rect x="16.5" y="12" width="3" height="2"/>
<rect x="3" y="16" width="3" height="2"/><rect x="7.5" y="16" width="3" height="2"/><rect x="12" y="16" width="3" height="2"/><rect x="16.5" y="16" width="3" height="2"/>
<rect x="3" y="20" width="3" height="2"/><rect x="7.5" y="20" width="3" height="2"/><rect x="12" y="20" width="3" height="2"/>
<rect x="3" y="24" width="3" height="2"/><rect x="7.5" y="24" width="3" height="2"/><rect x="12" y="24" width="3" height="2"/>
</g><rect x="16.5" y="20" width="3" height="6" fill="#f08020"/>
</svg>
<div style="left:540px;top:729px;width:56px;height:39px;background:linear-gradient(rgba(255,255,255,.18),rgba(255,255,255,.08));border:1px solid rgba(170,200,240,.6);box-sizing:border-box"></div>
<div style="left:550px;top:764px;width:36px;height:4px;background:radial-gradient(ellipse at 50% 100%,rgba(200,230,255,.8),rgba(200,230,255,0) 70%)"></div>
<svg style="left:540px;top:728px" width="56" height="40" viewBox="0 0 56 40">
<defs><linearGradient id="jl" x1="0" y1="0" x2="1" y2="1"><stop offset="0" stop-color="#f8d8f8"/><stop offset=".5" stop-color="#d870e0"/><stop offset="1" stop-color="#b030c0"/></linearGradient>
<radialGradient id="jsh" cx=".5" cy=".5" r=".5"><stop offset="0" stop-color="#c8ecff"/><stop offset="1" stop-color="#c8ecff" stop-opacity="0"/></radialGradient></defs>
<ellipse cx="28" cy="38" rx="14" ry="5" fill="url(#jsh)" opacity=".7"/>
<path d="M21 6.2 H40 V8.8 H21 Z" fill="#9a10b8" stroke="#e8e8f8" stroke-width=".6"/>
<path d="M28.5 8.8 H35.8 L35.5 27 Q35 32.5 28 32.8 Z" fill="#a818c0"/>
<circle cx="25.5" cy="25" r="5.6" fill="none" stroke="url(#jl)" stroke-width="5"/>
<path d="M29 19 L33 19 L31 24 Z" fill="#2a5a94"/>
</svg>
<svg style="left:1150px;top:745px" width="10" height="7"><path d="M0.5 6 L5 1 L9.5 6 Z" fill="#fff"/></svg>
<svg style="left:1172px;top:742px" width="16" height="14" viewBox="0 0 16 14"><g fill="#fff">
<path d="M4 0 L8 2.5 L4 5 L0 2.5 Z"/><path d="M12 0 L16 2.5 L12 5 L8 2.5 Z"/><path d="M4 5 L8 7.5 L4 10 L0 7.5 Z"/><path d="M12 5 L16 7.5 L12 10 L8 7.5 Z"/><path d="M8 9 L12 11.3 L8 13.6 L4 11.3 Z"/></g></svg>
<svg style="left:1196px;top:743px" width="16" height="12"><g fill="#fff"><rect x="0" y="9" width="2" height="2"/><rect x="3" y="7" width="2" height="4"/><rect x="6" y="5" width="2" height="6"/><rect x="9" y="3" width="2" height="8"/><rect x="12" y="1" width="3" height="10"/></g></svg>
<svg style="left:1222px;top:743px" width="14" height="13"><path d="M0.5 4 H3 L7 0.5 V12.5 L3 9 H0.5 Z" fill="#fff"/><path d="M10 3.5 Q12 6.5 10 9.5" stroke="#fff" stroke-width="1" fill="none"/></svg>
<svg style="left:1244px;top:742px" width="16" height="15"><rect x="0.5" y="0" width="1.6" height="15" fill="#fff"/><path d="M2 1 H9 Q10 4 15 3 Q13 6 15 7 Q10 9 8 7 H2 Z" fill="#fff"/></svg>
<span class="t" style="left:21px;top:6px;font-size:12px;color:#ffffff;letter-spacing:0.281px;">Jedicut</span>
<span class="t" style="left:7px;top:27px;font-size:11.5px;color:#101828;letter-spacing:-0.188px;-webkit-text-stroke:.35px #101828;">Fichier</span>
<span class="t" style="left:55px;top:27px;font-size:11.5px;color:#101828;letter-spacing:0.116px;-webkit-text-stroke:.35px #101828;">Outils</span>
<span class="t" style="left:99.5px;top:27px;font-size:11.5px;color:#101828;letter-spacing:-0.163px;-webkit-text-stroke:.35px #101828;">Fenêtre</span>
<span class="t" style="left:152px;top:27px;font-size:11.5px;color:#101828;letter-spacing:0.242px;-webkit-text-stroke:.35px #101828;">Aide</span>
<span class="t" style="left:11px;top:72px;font-size:12px;color:#000;transform:scaleX(0.8346);transform-origin:0 0;">Emplanture:</span>
<span class="t" style="left:13px;top:90px;font-size:12px;color:#000;transform:scaleX(0.8749);transform-origin:0 0;">Tronçon aile central_LC.</span>
<span class="t" style="left:1097px;top:91px;font-size:12px;color:#000;transform:scaleX(0.8305);transform-origin:0 0;">100%</span>
<span class="t" style="left:11px;top:335px;font-size:12px;color:#000;transform:scaleX(0.8370);transform-origin:0 0;">Saumon :</span>
<span class="t" style="left:13px;top:353px;font-size:12px;color:#000;transform:scaleX(0.8749);transform-origin:0 0;">Tronçon aile central_LC.</span>
<span class="t" style="left:202px;top:355px;font-size:12px;color:#000;transform:scaleX(0.8392);transform-origin:0 0;">Profil symétrique</span>
<span class="t" style="left:1097px;top:354px;font-size:12px;color:#000;transform:scaleX(0.8305);transform-origin:0 0;">100%</span>
<span class="t" style="left:11px;top:599px;font-size:12px;color:#000;transform:scaleX(0.8665);transform-origin:0 0;">Description :</span>
<span class="t" style="left:1041px;top:611px;font-size:12px;color:#000;transform:scaleX(0.8493);transform-origin:0 0;">Aile</span>
<span class="t" style="left:1057px;top:625px;font-size:12px;color:#000;transform:scaleX(0.8874);transform-origin:0 0;">Gauche</span>
<span class="t" style="left:1057px;top:639px;font-size:12px;color:#000;transform:scaleX(0.8558);transform-origin:0 0;">Droite</span>
<span class="t" style="left:1048px;top:662px;font-size:12px;color:#000;transform:scaleX(0.8894);transform-origin:0 0;">Assistant Découpe</span>
<span class="t" style="left:1048px;top:678px;font-size:12px;color:#000;transform:scaleX(0.8848);transform-origin:0 0;">Aperçu du vrillage</span>
<span class="t" style="left:30px;top:708px;font-size:12px;color:#000;transform:scaleX(0.8735);transform-origin:0 0;">Tronçon Aile Central 300mm.jdc</span>
<span class="t" style="left:1172px;top:71px;font-size:12px;color:#000;transform:scaleX(0.8347);transform-origin:0 0;">Corde Emplanture (mm) :</span>
<span class="t" style="left:1174px;top:88px;font-size:12px;color:#000;transform:scaleX(0.8487);transform-origin:0 0;">220</span>
<span class="t" style="left:1172px;top:110px;font-size:12px;color:#a3a3a3;transform:scaleX(0.8624);transform-origin:0 0;">Epaisseur relative Emplanture :</span>
<span class="t" style="left:1174px;top:128px;font-size:12px;color:#959595;transform:scaleX(0.8700);transform-origin:0 0;">0</span>
<span class="t" style="left:1172px;top:149px;font-size:12px;color:#000;transform:scaleX(0.8305);transform-origin:0 0;">Vrillage (°) :</span>
<span class="t" style="left:1174px;top:167px;font-size:12px;color:#000;transform:scaleX(0.8700);transform-origin:0 0;">0</span>
<span class="t" style="left:1179px;top:187px;font-size:12px;color:#000;transform:scaleX(0.8809);transform-origin:0 0;">Gestion de la peau</span>
<span class="t" style="left:1181px;top:203px;font-size:12px;color:#000;transform:scaleX(0.8518);transform-origin:0 0;">Epaisseur de la peau (mm) :</span>
<span class="t" style="left:1183px;top:221px;font-size:12px;color:#000;transform:scaleX(0.8390);transform-origin:0 0;">0.7</span>
<span class="t" style="left:1196px;top:241px;font-size:12px;color:#000;transform:scaleX(0.8626);transform-origin:0 0;">Inverser</span>
<span class="t" style="left:1172px;top:262px;font-size:12px;color:#a3a3a3;transform:scaleX(0.8403);transform-origin:0 0;">Corde Saumon (mm) :</span>
<span class="t" style="left:1174px;top:280px;font-size:12px;color:#959595;transform:scaleX(0.8487);transform-origin:0 0;">220</span>
<span class="t" style="left:1173px;top:302px;font-size:12px;color:#a3a3a3;transform:scaleX(0.8662);transform-origin:0 0;">Epaisseur relative Saumon :</span>
<span class="t" style="left:1175px;top:320px;font-size:12px;color:#959595;transform:scaleX(0.8700);transform-origin:0 0;">0</span>
<span class="t" style="left:1172px;top:342px;font-size:12px;color:#a3a3a3;transform:scaleX(0.8305);transform-origin:0 0;">Vrillage (°) :</span>
<span class="t" style="left:1174px;top:360px;font-size:12px;color:#959595;transform:scaleX(0.8700);transform-origin:0 0;">0</span>
<span class="t" style="left:1179px;top:379px;font-size:12px;color:#000;transform:scaleX(0.8809);transform-origin:0 0;">Gestion de la peau</span>
<span class="t" style="left:1181px;top:395px;font-size:12px;color:#a3a3a3;transform:scaleX(0.8518);transform-origin:0 0;">Epaisseur de la peau (mm) :</span>
<span class="t" style="left:1183px;top:413px;font-size:12px;color:#959595;transform:scaleX(0.8390);transform-origin:0 0;">0.7</span>
<span class="t" style="left:1196px;top:433px;font-size:12px;color:#a3a3a3;transform:scaleX(0.8626);transform-origin:0 0;">Inverser</span>
<span class="t" style="left:1171px;top:462px;font-size:12px;color:#000;transform:scaleX(0.8548);transform-origin:0 0;">Hauteur Départ (mm) :</span>
<span class="t" style="left:1173px;top:480px;font-size:12px;color:#000;transform:scaleX(0.8700);transform-origin:0 0;">50</span>
<span class="t" style="left:1171px;top:498px;font-size:12px;color:#000;transform:scaleX(0.8626);transform-origin:0 0;">Hauteur Dégagement (mm) :</span>
<span class="t" style="left:1173px;top:516px;font-size:12px;color:#000;transform:scaleX(0.8700);transform-origin:0 0;">60</span>
<span class="t" style="left:319px;top:135px;font-size:12.5px;color:#fdfdff;letter-spacing:0.272px;">Options</span>
<span class="t" style="left:382px;top:159px;font-size:12px;color:#000;transform:scaleX(0.9122);transform-origin:0 0;">Table active :</span>
<span class="t" style="left:384.5px;top:178px;font-size:12px;color:#000;transform:scaleX(0.8809);transform-origin:0 0;">Default</span>
<span class="t" style="left:367px;top:241px;font-size:14px;color:#000;transform:scaleX(0.9304);transform-origin:0 0;">Communication</span>
<span class="t" style="left:367px;top:294px;font-size:14px;color:#000;transform:scaleX(0.9335);transform-origin:0 0;">Machine</span>
<span class="t" style="left:367px;top:347px;font-size:14px;color:#000;transform:scaleX(0.8938);transform-origin:0 0;">Chauffe</span>
<span class="t" style="left:530.6px;top:220px;font-size:12px;color:#000;transform:scaleX(0.8526);transform-origin:0 0;">Moteur X1</span>
<span class="t" style="left:530.6px;top:244px;font-size:12px;color:#000;transform:scaleX(0.8910);transform-origin:0 0;">Nb mm / pas</span>
<span class="t" style="left:532.5px;top:262px;font-size:12px;color:#000;transform:scaleX(0.8882);transform-origin:0 0;">0.0025</span>
<span class="t" style="left:530.6px;top:284px;font-size:12px;color:#000;transform:scaleX(0.8900);transform-origin:0 0;">Vitesse de Découpe</span>
<span class="t" style="left:532.5px;top:302px;font-size:12px;color:#000;transform:scaleX(0.8700);transform-origin:0 0;">50</span>
<span class="t" style="left:530.6px;top:324px;font-size:12px;color:#000;transform:scaleX(0.8584);transform-origin:0 0;">Estimation (mm/s)</span>
<span class="t" style="left:532.5px;top:342px;font-size:12px;color:#000;transform:scaleX(0.8700);transform-origin:0 0;">3</span>
<span class="t" style="left:530.6px;top:364px;font-size:12px;color:#000;transform:scaleX(0.8820);transform-origin:0 0;">Vitesse Rapide</span>
<span class="t" style="left:532.5px;top:382px;font-size:12px;color:#000;transform:scaleX(0.8700);transform-origin:0 0;">30</span>
<span class="t" style="left:530.6px;top:404px;font-size:12px;color:#000;transform:scaleX(0.8584);transform-origin:0 0;">Estimation (mm/s)</span>
<span class="t" style="left:532.5px;top:422px;font-size:12px;color:#000;transform:scaleX(0.8990);transform-origin:0 0;">4.88</span>
<span class="t" style="left:545.3px;top:446px;font-size:12px;color:#000;transform:scaleX(0.8764);transform-origin:0 0;">Inverser</span>
<span class="t" style="left:660.6px;top:220px;font-size:12px;color:#000;transform:scaleX(0.8526);transform-origin:0 0;">Moteur X2</span>
<span class="t" style="left:660.6px;top:244px;font-size:12px;color:#000;transform:scaleX(0.8910);transform-origin:0 0;">Nb mm / pas</span>
<span class="t" style="left:662.5px;top:262px;font-size:12px;color:#000;transform:scaleX(0.8882);transform-origin:0 0;">0.0025</span>
<span class="t" style="left:660.6px;top:284px;font-size:12px;color:#000;transform:scaleX(0.8900);transform-origin:0 0;">Vitesse de Découpe</span>
<span class="t" style="left:662.5px;top:302px;font-size:12px;color:#000;transform:scaleX(0.8700);transform-origin:0 0;">50</span>
<span class="t" style="left:660.6px;top:324px;font-size:12px;color:#000;transform:scaleX(0.8584);transform-origin:0 0;">Estimation (mm/s)</span>
<span class="t" style="left:662.5px;top:342px;font-size:12px;color:#000;transform:scaleX(0.8700);transform-origin:0 0;">3</span>
<span class="t" style="left:660.6px;top:364px;font-size:12px;color:#000;transform:scaleX(0.8820);transform-origin:0 0;">Vitesse Rapide</span>
<span class="t" style="left:662.5px;top:382px;font-size:12px;color:#000;transform:scaleX(0.8700);transform-origin:0 0;">30</span>
<span class="t" style="left:660.6px;top:404px;font-size:12px;color:#000;transform:scaleX(0.8584);transform-origin:0 0;">Estimation (mm/s)</span>
<span class="t" style="left:662.5px;top:422px;font-size:12px;color:#000;transform:scaleX(0.8990);transform-origin:0 0;">4.88</span>
<span class="t" style="left:675.3px;top:446px;font-size:12px;color:#000;transform:scaleX(0.8764);transform-origin:0 0;">Inverser</span>
<span class="t" style="left:790.6px;top:220px;font-size:12px;color:#000;transform:scaleX(0.8558);transform-origin:0 0;">Moteur Y1</span>
<span class="t" style="left:790.6px;top:244px;font-size:12px;color:#000;transform:scaleX(0.8910);transform-origin:0 0;">Nb mm / pas</span>
<span class="t" style="left:792.5px;top:262px;font-size:12px;color:#000;transform:scaleX(0.8882);transform-origin:0 0;">0.0025</span>
<span class="t" style="left:790.6px;top:284px;font-size:12px;color:#000;transform:scaleX(0.8900);transform-origin:0 0;">Vitesse de Découpe</span>
<span class="t" style="left:792.5px;top:302px;font-size:12px;color:#000;transform:scaleX(0.8700);transform-origin:0 0;">50</span>
<span class="t" style="left:790.6px;top:324px;font-size:12px;color:#000;transform:scaleX(0.8584);transform-origin:0 0;">Estimation (mm/s)</span>
<span class="t" style="left:792.5px;top:342px;font-size:12px;color:#000;transform:scaleX(0.8700);transform-origin:0 0;">3</span>
<span class="t" style="left:790.6px;top:364px;font-size:12px;color:#000;transform:scaleX(0.8820);transform-origin:0 0;">Vitesse Rapide</span>
<span class="t" style="left:792.5px;top:382px;font-size:12px;color:#000;transform:scaleX(0.8700);transform-origin:0 0;">30</span>
<span class="t" style="left:790.6px;top:404px;font-size:12px;color:#000;transform:scaleX(0.8584);transform-origin:0 0;">Estimation (mm/s)</span>
<span class="t" style="left:792.5px;top:422px;font-size:12px;color:#000;transform:scaleX(0.8990);transform-origin:0 0;">4.88</span>
<span class="t" style="left:805.3px;top:446px;font-size:12px;color:#000;transform:scaleX(0.8764);transform-origin:0 0;">Inverser</span>
<span class="t" style="left:920.6px;top:220px;font-size:12px;color:#000;transform:scaleX(0.8558);transform-origin:0 0;">Moteur Y2</span>
<span class="t" style="left:920.6px;top:244px;font-size:12px;color:#000;transform:scaleX(0.8910);transform-origin:0 0;">Nb mm / pas</span>
<span class="t" style="left:922.5px;top:262px;font-size:12px;color:#000;transform:scaleX(0.8882);transform-origin:0 0;">0.0025</span>
<span class="t" style="left:920.6px;top:284px;font-size:12px;color:#000;transform:scaleX(0.8900);transform-origin:0 0;">Vitesse de Découpe</span>
<span class="t" style="left:922.5px;top:302px;font-size:12px;color:#000;transform:scaleX(0.8700);transform-origin:0 0;">50</span>
<span class="t" style="left:920.6px;top:324px;font-size:12px;color:#000;transform:scaleX(0.8584);transform-origin:0 0;">Estimation (mm/s)</span>
<span class="t" style="left:922.5px;top:342px;font-size:12px;color:#000;transform:scaleX(0.8700);transform-origin:0 0;">3</span>
<span class="t" style="left:920.6px;top:364px;font-size:12px;color:#000;transform:scaleX(0.8820);transform-origin:0 0;">Vitesse Rapide</span>
<span class="t" style="left:922.5px;top:382px;font-size:12px;color:#000;transform:scaleX(0.8700);transform-origin:0 0;">30</span>
<span class="t" style="left:920.6px;top:404px;font-size:12px;color:#000;transform:scaleX(0.8584);transform-origin:0 0;">Estimation (mm/s)</span>
<span class="t" style="left:922.5px;top:422px;font-size:12px;color:#000;transform:scaleX(0.8990);transform-origin:0 0;">4.88</span>
<span class="t" style="left:935.3px;top:446px;font-size:12px;color:#000;transform:scaleX(0.8764);transform-origin:0 0;">Inverser</span>
<span class="t" style="left:522.8px;top:473px;font-size:12px;color:#000;transform:scaleX(0.8630);transform-origin:0 0;">Longueur du fil chaud (mm) :</span>
<span class="t" style="left:524.5px;top:491px;font-size:12px;color:#000;transform:scaleX(0.8700);transform-origin:0 0;">600</span>
<span class="t" style="left:522.8px;top:509px;font-size:12px;color:#000;transform:scaleX(0.8555);transform-origin:0 0;">Longueur de l'axe X (mm) :</span>
<span class="t" style="left:524.5px;top:527px;font-size:12px;color:#000;transform:scaleX(0.8700);transform-origin:0 0;">800</span>
<span class="t" style="left:841.4px;top:574px;font-size:11.5px;color:#1c3050;letter-spacing:-1.013px;">OK</span>
<span class="t" style="left:904px;top:574px;font-size:11.5px;color:#202030;letter-spacing:0.112px;">Appliquer</span>
<span class="t" style="left:987.1px;top:574px;font-size:11.5px;color:#202030;letter-spacing:-0.306px;">Annuler</span>
<span class="t" style="left:1295.7px;top:736px;font-size:11.5px;color:#ffffff;letter-spacing:-0.423px;">8:36</span>
<span class="t" style="left:1278px;top:753px;font-size:11.5px;color:#ffffff;letter-spacing:-0.206px;">08/04/2018</span>

</body></html>
